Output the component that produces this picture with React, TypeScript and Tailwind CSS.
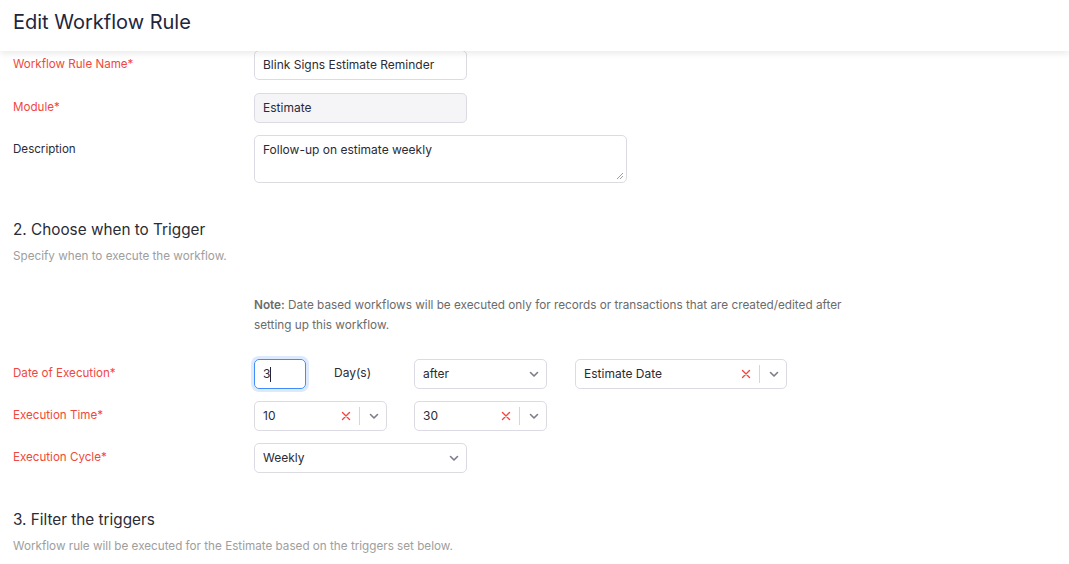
import React from "react";

const font = { fontFamily: "Inter, 'Noto Sans', sans-serif" };

function Chevron() {
  return (
    <svg width="12" height="12" viewBox="0 0 12 12" className="shrink-0">
      <path d="M2.5 4.5 L6 8 L9.5 4.5" fill="none" stroke="#7c7c8a" strokeWidth="1.6" strokeLinecap="round" strokeLinejoin="round" />
    </svg>
  );
}

function Cross() {
  return (
    <svg width="10" height="10" viewBox="0 0 10 10" className="shrink-0">
      <path d="M1.5 1.5 L8.5 8.5 M8.5 1.5 L1.5 8.5" stroke="#f0483e" strokeWidth="1.4" strokeLinecap="round" />
    </svg>
  );
}

function Select({ value, width, clearable }: { value: string; width: string; clearable?: boolean }) {
  return (
    <div className={`${width} h-[30px] flex items-center border border-[#dcdbe3] rounded-[5px] bg-white pl-[8px] pr-[6px] text-[12px] text-[#2b2b36]`}>
      <span className="flex-1 truncate -mt-px">{value}</span>
      {clearable && (
        <>
          <Cross />
          <span className="w-px h-[18px] bg-[#d6d6de] mx-[8px]" />
        </>
      )}
      <Chevron />
    </div>
  );
}

function Label({ text, required }: { text: string; required?: boolean }) {
  return (
    <div className={`w-[241px] shrink-0 pt-[6px] text-[11.6px] ${required ? "text-[#f0483e]" : "text-[#2b2b36]"}`}>
      {text}
      {required && "*"}
    </div>
  );
}

export default function App() {
  return (
    <div style={font} className="bg-white min-h-screen w-[1069px] h-[564px] overflow-hidden">
      {/* HEADER */}
      <div className="relative z-10 h-[51px] bg-white flex items-center px-[13px] shadow-[0_3px_6px_rgba(0,0,0,0.08)]">
        <h1 className="text-[20px] text-[#21263c] leading-none -mt-[8px]">Edit Workflow Rule</h1>
      </div>

      <div className="px-[13px] -mt-[1px]">
        {/* RULE NAME */}
        <div className="flex">
          <Label text="Workflow Rule Name" required />
          <div className="w-[213px] h-[30px] border border-[#dcdbe3] rounded-[5px] px-[8px] flex items-center text-[12px] text-[#2b2b36]">
            Blink Signs Estimate Reminder
          </div>
        </div>

        <div className="flex mt-[13px]">
          <Label text="Module" required />
          <div className="w-[213px] h-[30px] border border-[#dcdbe3] rounded-[5px] px-[8px] flex items-center text-[12px] text-[#2b2b36] bg-[#f5f5f8]">
            Estimate
          </div>
        </div>

        <div className="flex mt-[12px]">
          <Label text="Description" />
          <div className="relative w-[373px] h-[48px] border border-[#dcdbe3] rounded-[5px] px-[8px] pt-[5px] text-[12px] text-[#2b2b36]">
            Follow-up on estimate weekly
            <svg width="8" height="8" viewBox="0 0 8 8" className="absolute right-[2px] bottom-[2px]">
              <path d="M7 1 L1 7 M7 4 L4 7" stroke="#888" strokeWidth="0.8" />
            </svg>
          </div>
        </div>

        {/* SECTION 2 */}
        <h2 className="mt-[35px] text-[15.3px] leading-[24px] text-[#2b2b36]">2. Choose when to Trigger</h2>
        <p className="mt-[5px] text-[11.7px] leading-[18px] text-[#9e9e9e]">Specify when to execute the workflow.</p>

        <div className="flex mt-[30px]">
          <div className="w-[241px] shrink-0" />
          <div className="w-[600px] text-[11.75px] leading-[20px] text-[#6b6b6b]">
            <b className="font-semibold">Note:</b> Date based workflows will be executed only for records or
            transactions that are created/edited after setting up this workflow.
          </div>
        </div>

        <div className="flex mt-[24px]">
          <Label text="Date of Execution" required />
          <div className="flex items-center">
            <div className="w-[52px] h-[30px] border border-[#408dfb] rounded-[5px] px-[8px] flex items-center text-[12px] text-[#2b2b36] shadow-[0_0_0_3px_rgba(64,141,251,0.18)]">
              3<span className="w-px h-[15px] bg-[#21263c]" />
            </div>
            <div className="ml-[28px] w-[80px] text-[12px] text-[#2b2b36] -mt-[2px]">Day(s)</div>
            <Select value="after" width="w-[133px]" />
            <div className="ml-[28px]">
              <Select value="Estimate Date" width="w-[212px]" clearable />
            </div>
          </div>
        </div>

        <div className="flex mt-[12px]">
          <Label text="Execution Time" required />
          <div className="flex items-center gap-[27px]">
            <Select value="10" width="w-[133px]" clearable />
            <Select value="30" width="w-[133px]" clearable />
          </div>
        </div>

        <div className="flex mt-[12px]">
          <Label text="Execution Cycle" required />
          <Select value="Weekly" width="w-[213px]" />
        </div>

        {/* SECTION 3 */}
        <h2 className="mt-[35px] text-[15.3px] leading-[24px] text-[#2b2b36]">3. Filter the triggers</h2>
        <p className="mt-[5px] text-[11.7px] leading-[18px] text-[#9e9e9e]">
          Workflow rule will be executed for the Estimate based on the triggers set below.
        </p>
      </div>
    </div>
  );
}
